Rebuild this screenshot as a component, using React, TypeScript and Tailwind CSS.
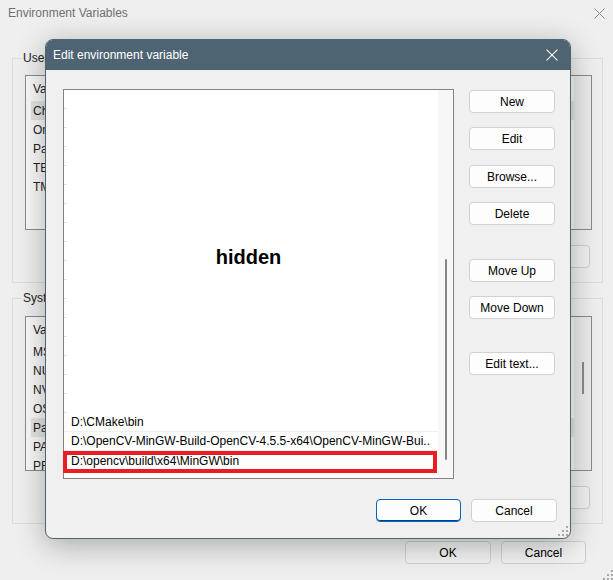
import React from "react";

const Btn = ({
  label,
  className = "",
  tone = "bg-[#fdfdfd] border-[#d1d1d1]",
}: {
  label: string;
  className?: string;
  tone?: string;
}) => (
  <div
    className={`h-[23px] rounded-[4px] border flex items-center justify-center text-[12px] text-black ${tone} ${className}`}
  >
    {label}
  </div>
);

const Grip = () => (
  <svg width="10" height="10" viewBox="0 0 10 10">
    {[
      [8, 0],
      [4, 4],
      [8, 4],
      [0, 8],
      [4, 8],
      [8, 8],
    ].map(([x, y], i) => (
      <rect key={i} x={x} y={y} width="2" height="2" fill="#a8a8a8" />
    ))}
  </svg>
);

const XIcon = ({ color, size = 11 }: { color: string; size?: number }) => (
  <svg width={size} height={size} viewBox="0 0 11 11">
    <path d="M0.5 0.5 L10.5 10.5 M10.5 0.5 L0.5 10.5" stroke={color} strokeWidth="1" fill="none" />
  </svg>
);

const BgList = ({ rows, selected, thumb }: { rows: string[]; selected: number; thumb?: boolean }) => (
  <div className="h-[155px] border border-[#8a8a8a] bg-[#f9f9f9] overflow-hidden flex">
    <div className="flex-1 min-w-0">
      <div className="h-[25px] flex items-center pl-[7px] text-[#222]">Variable</div>
      {rows.map((r, i) => (
        <div
          key={i}
          className={`h-[19px] ml-[5px] flex items-center pl-[2px] text-[#222] ${i === selected ? "bg-[#e4e4e4]" : ""}`}
        >
          {r}
        </div>
      ))}
    </div>
    <div className="w-[17px] bg-[#ebebeb] flex justify-center">
      {thumb && <div className="mt-[45px] w-[2px] h-[32px] bg-[#8a8a8a]" />}
    </div>
  </div>
);

const bgTone = "bg-[#f2f2f2] border-[#cfcfcf]";

export default function App() {
  return (
    <div className="w-[613px] h-[580px] bg-[#efefef] relative overflow-hidden font-['Liberation_Sans',Arial,sans-serif] text-[12px]">
      {/* Background window */}
      <div className="h-[26px] flex items-center justify-between pl-[8px] pr-[8px] text-[#6f6f6f]">
        <span>Environment Variables</span>
        <XIcon color="#8a8a8a" />
      </div>
      <div className="pl-[12px] pr-[10px]">
        <fieldset className="mt-[25px] border border-[#dcdcdc] pl-[12px] pr-[10px] pb-[14px]">
          <legend className="h-[14px] leading-[14px] ml-[-3px] px-[1px] text-[#222]">User variables for user</legend>
          <div className="mt-[10px]">
            <BgList rows={["ChocolateyLastPathUpdate", "OneDrive", "Path", "TEMP", "TMP"]} selected={0} />
          </div>
          <div className="mt-[15px] flex justify-end gap-[10px] mr-[2px]">
            <Btn label="New..." className="w-[86px]" tone={bgTone} />
            <Btn label="Edit..." className="w-[86px]" tone={bgTone} />
            <Btn label="Delete" className="w-[86px]" tone={bgTone} />
          </div>
        </fieldset>
        <fieldset className="mt-[8px] border border-[#dcdcdc] pl-[12px] pr-[10px] pb-[14px]">
          <legend className="h-[14px] leading-[14px] ml-[-3px] px-[1px] text-[#222]">System variables</legend>
          <div className="mt-[11px]">
            <BgList
              rows={["MSMPI_BIN", "NUMBER_OF_PROCESSORS", "NVM_HOME", "OS", "Path", "PATHEXT", "PROCESSOR_ARCHITECTURE"]}
              selected={4}
              thumb
            />
          </div>
          <div className="mt-[15px] flex justify-end gap-[10px] mr-[2px]">
            <Btn label="New..." className="w-[86px]" tone={bgTone} />
            <Btn label="Edit..." className="w-[86px]" tone={bgTone} />
            <Btn label="Delete" className="w-[86px]" tone={bgTone} />
          </div>
        </fieldset>
      </div>
      <div className="mt-[17px] flex justify-end gap-[10px] pr-[27px]">
        <Btn label="OK" className="w-[86px]" tone={bgTone} />
        <Btn label="Cancel" className="w-[85px]" tone={bgTone} />
      </div>
      <div className="absolute right-[0px] bottom-[0px]">
        <Grip />
      </div>

      {/* Modal dialog */}
      <div className="absolute left-[45px] top-[39px] w-[526px] h-[500px] rounded-[8px] border border-[#4f6473] bg-[#f0f0f0] overflow-hidden shadow-[0_6px_30px_rgba(0,0,0,0.3)] flex flex-col">
        <div className="h-[30px] bg-[#4f6473] flex items-center justify-between pl-[7px] pr-[12px] text-white">
          <span>Edit environment variable</span>
          <XIcon color="#ffffff" size={12} />
        </div>
        <div className="flex pl-[17px] pt-[19px]">
          <div className="w-[391px] h-[390px] border border-[#838383] bg-white flex">
            <div className="flex-1 flex flex-col">
              <div className="h-[323px] flex">
                <div className="w-[3px] h-full bg-[repeating-linear-gradient(to_bottom,transparent_0px,transparent_18px,#e2e2e2_18px,#e2e2e2_19px)]" />
                <div className="flex-1 flex justify-center pt-[156px] pr-[8px]">
                  <span className="font-bold text-[20px] leading-[22px] text-black">hidden</span>
                </div>
              </div>
              <div className="h-[19px] flex items-center pl-[7px] border-b border-[#efefef] text-black">D:\CMake\bin</div>
              <div className="h-[19px] flex items-center pl-[7px] border-b border-[#efefef] text-black">
                D:\OpenCV-MinGW-Build-OpenCV-4.5.5-x64\OpenCV-MinGW-Bui..
              </div>
              <div className="h-[19px] flex items-center pl-[7px] text-black relative">
                D:\opencv\build\x64\MinGW\bin
                <div className="absolute left-[-1px] right-[1px] top-0 h-[22px] border-[4px] border-[#ec1c24]" />
              </div>
            </div>
            <div className="w-[15px] bg-[#f7f7f7] flex justify-center">
              <div className="mt-[169px] w-[2px] h-[201px] rounded-full bg-[#858585]" />
            </div>
          </div>
          <div className="ml-[15px] mt-[1px] flex flex-col">
            <Btn label="New" className="w-[86px]" />
            <Btn label="Edit" className="w-[86px] mt-[14px]" />
            <Btn label="Browse..." className="w-[86px] mt-[15px]" />
            <Btn label="Delete" className="w-[86px] mt-[14px]" />
            <Btn label="Move Up" className="w-[86px] mt-[34px]" />
            <Btn label="Move Down" className="w-[86px] mt-[14px]" />
            <Btn label="Edit text..." className="w-[86px] mt-[33px]" />
          </div>
        </div>
        <div className="mt-[20px] flex justify-end gap-[10px] pr-[13px]">
          <Btn label="OK" className="w-[85px] shadow-[inset_0_-1px_0_#003e92]" tone="bg-[#fdfdfd] border-[#0067c0]" />
          <Btn label="Cancel" className="w-[86px]" />
        </div>
        <div className="absolute right-[2px] bottom-[2px]">
          <Grip />
        </div>
      </div>
    </div>
  );
}
